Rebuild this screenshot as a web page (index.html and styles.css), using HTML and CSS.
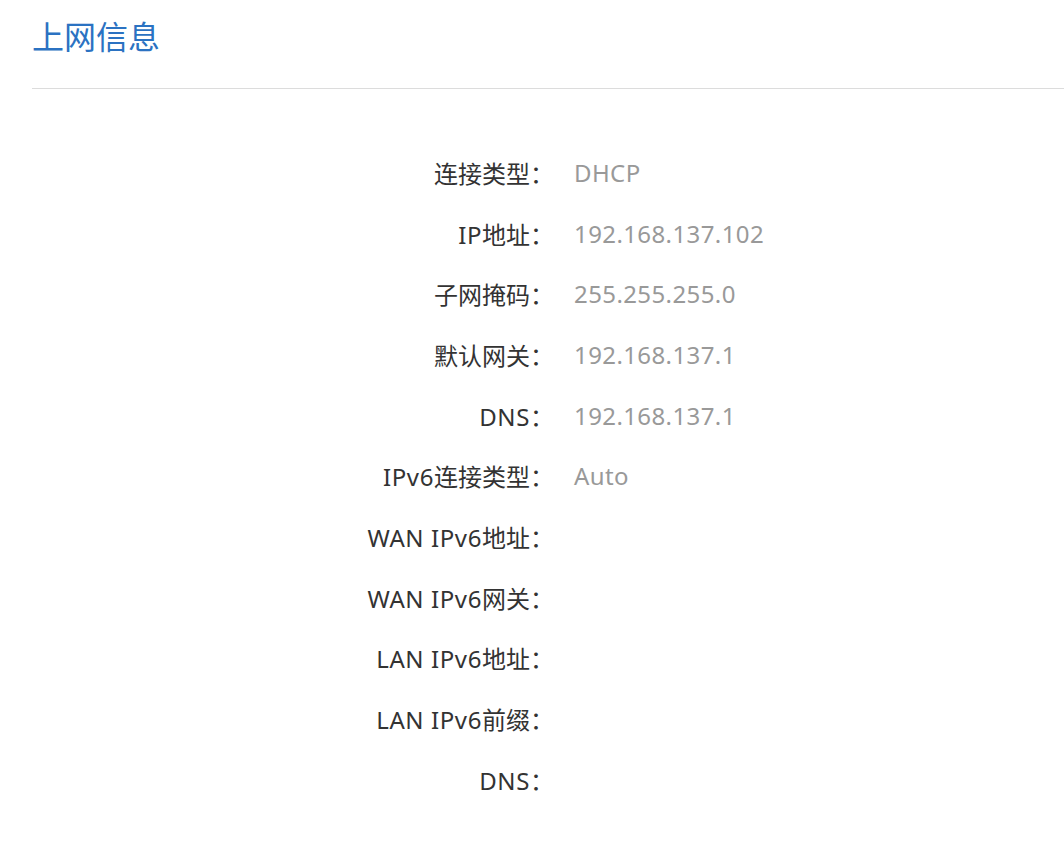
FILE: index.html
```html
<!DOCTYPE html>
<html lang="zh-CN">
<head>
<meta charset="utf-8">
<link rel="stylesheet" href="styles.css">
</head>
<body>
<div class="page">
  <h1 class="title">上网信息</h1>
  <div class="divider"></div>
  <div class="info">
    <div class="row"><span class="label">连接类型：</span><span class="value">DHCP</span></div>
    <div class="row"><span class="label"><span class="en">IP</span>地址：</span><span class="value">192.168.137.102</span></div>
    <div class="row"><span class="label">子网掩码：</span><span class="value">255.255.255.0</span></div>
    <div class="row"><span class="label">默认网关：</span><span class="value">192.168.137.1</span></div>
    <div class="row"><span class="label"><span class="en">DNS</span>：</span><span class="value">192.168.137.1</span></div>
    <div class="row"><span class="label"><span class="en">IPv6</span>连接类型：</span><span class="value">Auto</span></div>
    <div class="row"><span class="label"><span class="en">WAN IPv6</span>地址：</span><span class="value"></span></div>
    <div class="row"><span class="label"><span class="en">WAN IPv6</span>网关：</span><span class="value"></span></div>
    <div class="row"><span class="label"><span class="en">LAN IPv6</span>地址：</span><span class="value"></span></div>
    <div class="row"><span class="label"><span class="en">LAN IPv6</span>前缀：</span><span class="value"></span></div>
    <div class="row"><span class="label"><span class="en">DNS</span>：</span><span class="value"></span></div>
  </div>
</div>
</body>
</html>
```
FILE: styles.css
```css
html, body {
  margin: 0;
  padding: 0;
  background: #ffffff;
}
body {
  font-family: "Noto Sans", "Noto Sans CJK SC", sans-serif;
  color: #333333;
}
.page {
  padding-left: 32px;
}
.title {
  margin: 0;
  padding-top: 17px;
  font-size: 32px;
  line-height: 40px;
  font-weight: normal;
  color: #2b72c2;
  height: 71px;
}
.divider {
  height: 1px;
  background: #dcdcdc;
}
.info {
  padding-top: 53px;
}
.row {
  display: flex;
  align-items: center;
  height: 60.7px;
  font-size: 24px;
}
.label {
  width: 522px;
  text-align: right;
  color: #333333;
}
.en {
  letter-spacing: 0.6px;
}
.value {
  margin-left: 20px;
  color: #999999;
  letter-spacing: 0.4px;
}
```
